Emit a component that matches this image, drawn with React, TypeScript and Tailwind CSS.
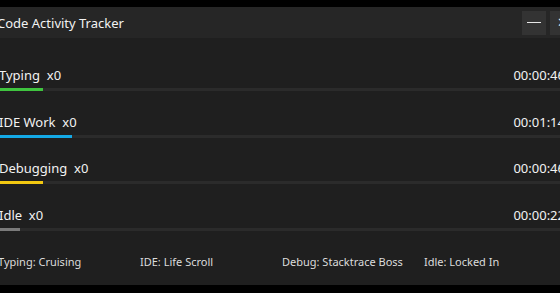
const activities = [
  { name: "Typing", count: 0, time: "00:00:46", bar: "bg-[#3fc43f]", width: 43 },
  { name: "IDE Work", count: 0, time: "00:01:14", bar: "bg-[#14a9e6]", width: 72 },
  { name: "Debugging", count: 0, time: "00:00:46", bar: "bg-[#f2c811]", width: 43 },
  { name: "Idle", count: 0, time: "00:00:22", bar: "bg-[#7a7a7a]", width: 20 },
];

const titles = [
  "Typing: Cruising",
  "IDE: Life Scroll",
  "Debug: Stacktrace Boss",
  "Idle: Locked In",
];

export default function App() {
  return (
    <div
      className="w-[560px] h-[293px] overflow-hidden bg-black pt-[7px]"
      style={{ fontFamily: '"Segoe UI", "Noto Sans", sans-serif' }}
    >
      <div className="-ml-[3px] w-[580px] h-[278px] flex flex-col bg-[#1f1f1f] text-[#f2f2f2]">
        <div className="h-[31px] flex items-center justify-between bg-[#262626] pr-[3px]">
          <span className="text-[13px] leading-5">Code Activity Tracker</span>
          <div className="flex gap-1">
            <button className="w-6 h-6 flex items-center justify-center bg-[#333333]">
              <span className="block w-[14px] h-px bg-[#e6e6e6]" />
            </button>
            <button className="w-6 h-6 flex items-center justify-center bg-[#333333] text-[13px] text-[#e6e6e6]">
              ✕
            </button>
          </div>
        </div>

        <div className="flex flex-col gap-[20.7px] pt-[27px] pl-[2px] pr-[12px]">
          {activities.map((a) => (
            <div key={a.name} className="flex flex-col">
              <div className="flex items-center justify-between text-[13px] leading-5">
                <span className="whitespace-pre">{a.name}  x{a.count}</span>
                <span>{a.time}</span>
              </div>
              <div className="mt-[3px] h-[3px] bg-[#2b2b2b] ml-px">
                <div className={`h-full ${a.bar}`} style={{ width: a.width }} />
              </div>
            </div>
          ))}
        </div>

        <div className="grid grid-cols-[142px_142px_142px_142px] pl-[1px] mt-[23px] text-[11px] leading-4 text-[#dcdcdc]">
          {titles.map((t) => (
            <span key={t}>{t}</span>
          ))}
        </div>
      </div>
    </div>
  );
}
